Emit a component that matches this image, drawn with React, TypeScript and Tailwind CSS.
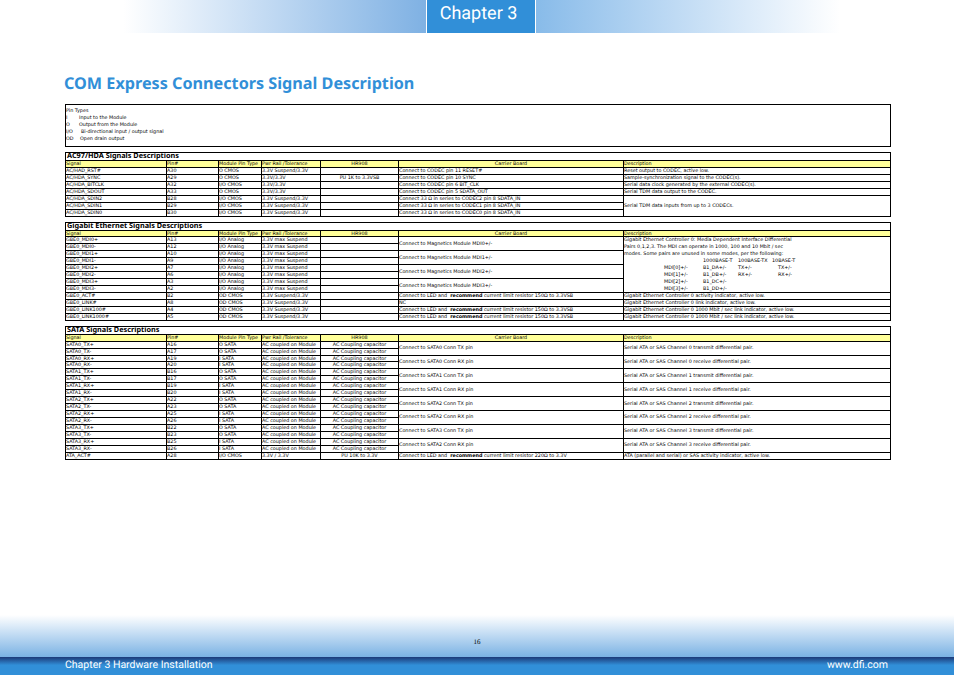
const font = "font-['DejaVu_Sans',sans-serif] [text-rendering:geometricPrecision]";

const columns = "grid grid-cols-[101px_52px_43px_59px_78px_225px_267px]";
const cell = "border-r border-b border-black h-[6.94px] leading-[6px] whitespace-nowrap";
const headers = ["Signal", "Pin#", "Module Pin Type", "Pwr Rail /Tolerance", "HR908", "Carrier Board", "Description"];

type Row = {
  signal: string;
  pin: string;
  type: string;
  rail: string;
  hr?: string;
  carrier?: React.ReactNode;
  span?: number;
  desc?: React.ReactNode;
  descSpan?: number;
};

const Recommend = ({ value, to = "3.3VSB" }: { value: string; to?: string }) => (
  <>
    Connect to LED and&nbsp;&nbsp;<b>recommend</b> current limit resistor {value} to {to}
  </>
);

const acRows: Row[] = [
  { signal: "AC/HAD_RST#", pin: "A30", type: "O CMOS", rail: "3.3V Suspend/3.3V", carrier: "Connect to CODEC pin 11 RESET#", desc: "Reset output to CODEC, active low." },
  { signal: "AC/HDA_SYNC", pin: "A29", type: "O CMOS", rail: "3.3V/3.3V", hr: "PU 1K to 3.3VSB", carrier: "Connect to CODEC pin 10 SYNC", desc: "Sample-synchronization signal to the CODEC(s)." },
  { signal: "AC/HDA_BITCLK", pin: "A32", type: "I/O CMOS", rail: "3.3V/3.3V", carrier: "Connect to CODEC pin 6 BIT_CLK", desc: "Serial data clock generated by the external CODEC(s)." },
  { signal: "AC/HDA_SDOUT", pin: "A33", type: "O CMOS", rail: "3.3V/3.3V", carrier: "Connect to CODEC pin 5 SDATA_OUT", desc: "Serial TDM data output to the CODEC." },
  { signal: "AC/HDA_SDIN2", pin: "B28", type: "I/O CMOS", rail: "3.3V Suspend/3.3V", carrier: "Connect 33 Ω in series to CODEC2 pin 8 SDATA_IN", desc: "Serial TDM data inputs from up to 3 CODECs.", descSpan: 3 },
  { signal: "AC/HDA_SDIN1", pin: "B29", type: "I/O CMOS", rail: "3.3V Suspend/3.3V", carrier: "Connect 33 Ω in series to CODEC1 pin 8 SDATA_IN" },
  { signal: "AC/HDA_SDIN0", pin: "B30", type: "I/O CMOS", rail: "3.3V Suspend/3.3V", carrier: "Connect 33 Ω in series to CODEC0 pin 8 SDATA_IN" },
];

const MdiTable = () => (
  <div className="flex flex-col leading-[6.94px]">
    <span>Gigabit Ethernet Controller 0: Media Dependent Interface Differential</span>
    <span>Pairs 0,1,2,3. The MDI can operate in 1000, 100 and 10 Mbit / sec</span>
    <span>modes. Some pairs are unused in some modes, per the following:</span>
    <div className="grid grid-cols-[39px_35px_40px_40px] pl-[40px]">
      <span className="col-start-2">1000BASE-T</span><span>100BASE-TX</span><span className="-ml-[6px]">10BASE-T</span>
      <span>MDI[0]+/-</span><span>B1_DA+/-</span><span>TX+/-</span><span>TX+/-</span>
      <span>MDI[1]+/-</span><span>B1_DB+/-</span><span>RX+/-</span><span>RX+/-</span>
      <span>MDI[2]+/-</span><span>B1_DC+/-</span><span /><span />
      <span>MDI[3]+/-</span><span>B1_DD+/-</span><span /><span />
    </div>
  </div>
);

const mdi = (signal: string, pin: string, n?: number): Row => ({
  signal,
  pin,
  type: "I/O Analog",
  rail: "3.3V max Suspend",
  ...(n !== undefined ? { carrier: `Connect to Magnetics Module MDI${n}+/-`, span: 2 } : {}),
});

const gbeRows: Row[] = [
  { ...mdi("GBE0_MDI0+", "A13", 0), desc: <MdiTable />, descSpan: 8 },
  mdi("GBE0_MDI0-", "A12"),
  mdi("GBE0_MDI1+", "A10", 1),
  mdi("GBE0_MDI1-", "A9"),
  mdi("GBE0_MDI2+", "A7", 2),
  mdi("GBE0_MDI2-", "A6"),
  mdi("GBE0_MDI3+", "A3", 3),
  mdi("GBE0_MDI3-", "A2"),
  { signal: "GBE0_ACT#", pin: "B2", type: "OD CMOS", rail: "3.3V Suspend/3.3V", carrier: <Recommend value="150Ω" />, desc: "Gigabit Ethernet Controller 0 activity indicator, active low." },
  { signal: "GBE0_LINK#", pin: "A8", type: "OD CMOS", rail: "3.3V Suspend/3.3V", carrier: "NC", desc: "Gigabit Ethernet Controller 0 link indicator, active low." },
  { signal: "GBE0_LINK100#", pin: "A4", type: "OD CMOS", rail: "3.3V Suspend/3.3V", carrier: <Recommend value="150Ω" />, desc: "Gigabit Ethernet Controller 0 1000 Mbit / sec link indicator, active low." },
  { signal: "GBE0_LINK1000#", pin: "A5", type: "OD CMOS", rail: "3.3V Suspend/3.3V", carrier: <Recommend value="150Ω" />, desc: "Gigabit Ethernet Controller 0 1000 Mbit / sec link indicator, active low." },
];

const sataPins = ["A16", "A17", "A19", "A20", "B16", "B17", "B19", "B20", "A22", "A23", "A25", "A26", "B22", "B23", "B25", "B26"];

const sataRows: Row[] = [
  ...sataPins.map((pin, i): Row => {
    const ch = Math.floor(i / 4);
    const isTx = i % 4 < 2;
    const dir = isTx ? "TX" : "RX";
    const first = i % 2 === 0;
    return {
      signal: `SATA${ch}_${dir}${first ? "+" : "-"}`,
      pin,
      type: isTx ? "O SATA" : "I SATA",
      rail: "AC coupled on Module",
      hr: "AC Coupling capacitor",
      ...(first
        ? {
            carrier: `Connect to SATA${i === 14 ? 2 : ch} Conn ${dir} pin`,
            span: 2,
            desc: `Serial ATA or SAS Channel ${ch} ${isTx ? "transmit" : "receive"} differential pair.`,
            descSpan: 2,
          }
        : {}),
    };
  }),
  {
    signal: "ATA_ACT#",
    pin: "A28",
    type: "I/O CMOS",
    rail: "3.3V / 3.3V",
    hr: "PU 10K to 3.3V",
    carrier: <Recommend value="220Ω" to="3.3V" />,
    desc: "ATA (parallel and serial) or SAS activity indicator, active low.",
  },
];

const spanClass = (n?: number) => {
  if (n === 2) return "row-span-2 h-[13.88px] flex items-center";
  if (n === 3) return "row-span-3 h-[20.82px] flex items-center";
  if (n === 8) return "row-span-8 h-[55.52px]";
  return "";
};

const SignalTable = ({ title, rows }: { title: string; rows: Row[] }) => (
  <section className="border-t border-l border-black w-[826px]">
    <h2 className="h-[8px] border-r border-b border-black pl-px text-[7.3px] leading-[7px] font-bold text-black whitespace-nowrap font-['Noto_Sans',sans-serif]">
      {title}
    </h2>
    <div className={`${columns} text-[4.85px] text-black`}>
      {headers.map((h, i) => (
        <div key={h} className={`${cell} bg-[#ffff99] ${i === 4 || i === 5 ? "text-center" : ""}`}>
          {h}
        </div>
      ))}
      {rows.map((r) => (
        <div key={r.signal} className="contents">
          <div className={cell}>{r.signal}</div>
          <div className={cell}>{r.pin}</div>
          <div className={cell}>{r.type}</div>
          <div className={cell}>{r.rail}</div>
          <div className={`${cell} text-center`}>{r.hr}</div>
          {r.carrier !== undefined && <div className={`${cell} ${spanClass(r.span)}`}>{r.carrier}</div>}
          {r.desc !== undefined && <div className={`${cell} ${spanClass(r.descSpan)}`}>{r.desc}</div>}
        </div>
      ))}
    </div>
  </section>
);

export default function App() {
  return (
    <div className={`${font} relative flex flex-col h-[675px] w-[954px] overflow-hidden bg-white`}>
      <header className="flex h-[33px] shrink-0">
        <div className="w-[426px] bg-gradient-to-r from-white from-[29%] to-[#7fb1e3]" />
        <div className="w-[108px] mx-px pr-[5px] bg-[#318fd8] text-white text-center font-['Roboto',sans-serif] text-[18px] leading-[27px]">
          Chapter 3
        </div>
        <div className="w-[304px] bg-gradient-to-r from-[#88bbe9] to-white" />
      </header>

      <h1 className="mt-[40px] pl-[64px] h-[20px] text-[#318fd8] font-bold text-[16.2px] leading-[20px] font-['Noto_Sans',sans-serif]">
        COM Express Connectors Signal Description
      </h1>

      <main className="ml-[65px] mt-[11px] flex flex-col gap-[5px]">
        <div className="border border-black w-[826px] h-[43px] pt-[3px] text-[4.85px] leading-[7px] text-black">
          <p>Pin Types</p>
          <p className="flex"><span className="w-[13px]">I</span>Input to the Module</p>
          <p className="flex"><span className="w-[13px]">O</span>Output from the Module</p>
          <p className="flex"><span className="w-[15px]">I/O</span>Bi-directional input / output signal</p>
          <p className="flex"><span className="w-[14px]">OD</span>Open drain output</p>
        </div>
        <SignalTable title="AC97/HDA Signals Descriptions" rows={acRows} />
        <SignalTable title="Gigabit Ethernet Signals Descriptions" rows={gbeRows} />
        <SignalTable title="SATA Signals Descriptions" rows={sataRows} />
      </main>

      <footer className="mt-auto shrink-0">
        <div className="h-[42px] bg-gradient-to-b from-white to-[#7ab2e3] text-center text-[7px] leading-[9px] pt-[23px] text-black font-['Liberation_Serif',serif]">
          16
        </div>
        <div className="h-[18px] pb-[2px] bg-[linear-gradient(to_bottom,#1c3a78,#318fd8_45%)] flex justify-between items-center pl-[65px] pr-[66px] text-white text-[10.5px] font-['Roboto',sans-serif]">
          <span>Chapter 3 Hardware Installation</span>
          <span>www.dfi.com</span>
        </div>
      </footer>
    </div>
  );
}
